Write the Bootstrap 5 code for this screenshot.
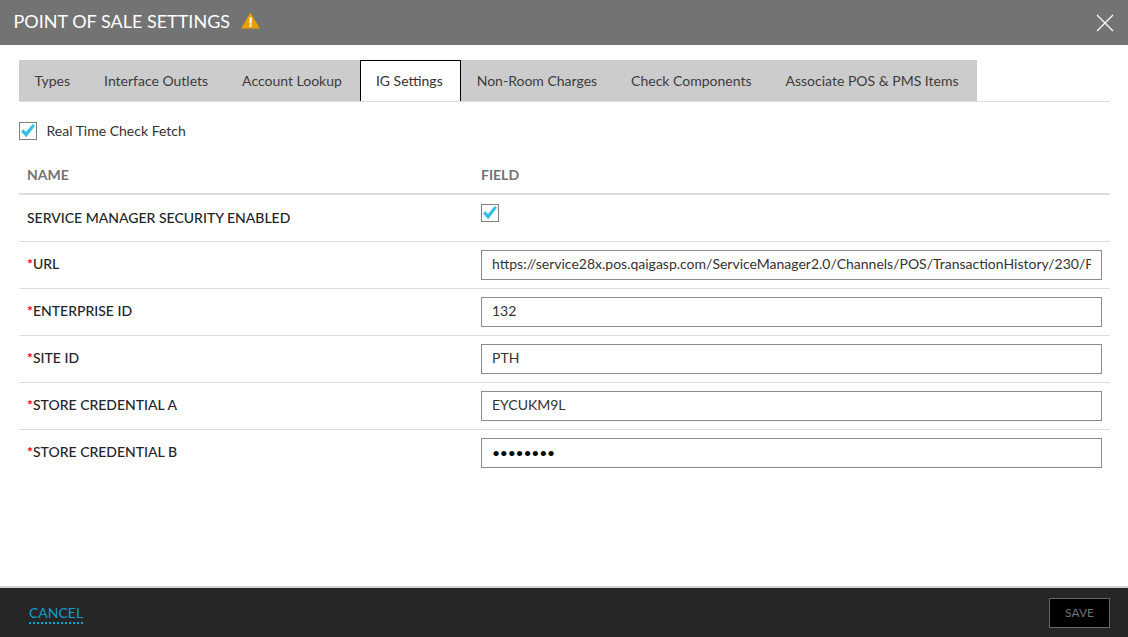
<!DOCTYPE html>
<html lang="en">
<head>
<meta charset="utf-8">
<title>Point of Sale Settings</title>
<link href="https://cdn.jsdelivr.net/npm/bootstrap@5.3.0/dist/css/bootstrap.min.css" rel="stylesheet">
<style>
html, body { height: 100%; }
body { font-family: Lato, "Liberation Sans", sans-serif; font-size: 14px; color: #000; overflow: hidden; }
.pos-shell { height: 637px; }
.pos-head { height: 45px; background: #737373; color: #fff; padding: 0 14px 3px 13.5px; }
.pos-title { font-size: 18px; font-weight: 400; margin: 0; line-height: 1; }
.pos-warn { margin-left: 11px; margin-top: -1px; }
.pos-close { width: 18px; height: 18px; display: block; background: none; border: 0; padding: 0; margin-top: -2px; }
.pos-body { padding: 15px 18px 0 19px; }
.pos-tabs { border-bottom: 1px solid #ddd; height: 42px; flex-wrap: nowrap; }
.pos-tabs .nav-link { height: 41px; padding: 0 17.5px 2px 14.5px; line-height: 39px; color: #3c3c3c; background: #ccc; border: 1px solid #ccc; border-bottom: 0; border-radius: 0; font-size: 14px; margin: 0; white-space: nowrap; }
.pos-tabs .nav-link.active { background: #fff; color: #333; border-color: #000; }
.pos-check[type=checkbox] { width: 18px; height: 18px; margin: 0; border: 1px solid #808080; border-radius: 0; background-color: #fff; flex: none; float: none; }
.pos-check[type=checkbox]:checked { background-color: #fff; border-color: #808080; background-size: 16px 16px; background-position: center; background-image: url("data:image/svg+xml,%3Csvg xmlns='http://www.w3.org/2000/svg' viewBox='0 0 16 16'%3E%3Cpath d='M1 8.4l2.4-2.2 2.5 2.8L12.8 1 15 2.8 6.2 14.2z' fill='%2333bfe6'/%3E%3C/svg%3E"); }
.pos-fetch { margin-top: 20px; height: 18px; }
.pos-fetch label { margin-left: 9.5px; color: #333; line-height: 18px; }
.pos-table { margin: 18px 0 0; table-layout: fixed; width: 100%; }
.pos-table > :not(caption) > * > * { padding: 0 8px; border-bottom: 1px solid #ddd; box-shadow: none; vertical-align: top; }
.pos-table thead th { height: 36px; border-bottom: 2px solid #ddd; color: #737373; font-weight: 700; font-size: 14px; padding-top: 8px; line-height: 17px; }
.pos-table tbody td { height: 47px; font-weight: 500; }
.pos-table .pos-label { padding-top: 13px; line-height: 17px; }
.pos-table .pos-field { padding-top: 8px; }
.pos-table tbody tr:first-child .pos-check { margin-top: 1px; }
.pos-table tbody tr:first-child .pos-label { padding-top: 14px; }
.pos-table tbody tr:last-child td { border-bottom: 0; }
.pos-star { color: #f00; font-weight: 700; }
.pos-input { height: 30px; width: 621px; padding: 0 10px 2px; border: 1px solid #8c8c8c; border-radius: 0; font-size: 14px; color: #333; }
.pos-input[type=password] { color: #000; letter-spacing: -0.25px; padding-bottom: 0; }
.pos-colname { width: 454px; }
.pos-foot { height: 51px; background: #262626; border-top: 2px solid #d4d4d4; padding: 0 18px 0 29px; margin-top: auto; }
.pos-cancel { color: #0f9fc8; font-size: 14px; text-decoration: none; border-bottom: 2px dotted #00a9d8; line-height: 17px; padding-bottom: 1px; margin-top: 3px; }
.pos-save { width: 61px; height: 30px; padding: 0; background: #000; border: 1px solid #666; border-radius: 0; color: #707070; font-size: 12px; margin-top: 1px; }
.pos-save:disabled { background: #000; border-color: #666; color: #707070; opacity: 1; }
</style>
</head>
<body>
<div class="pos-shell d-flex flex-column">
  <header class="pos-head d-flex align-items-center justify-content-between">
    <div class="d-flex align-items-center">
      <h1 class="pos-title">POINT OF SALE SETTINGS</h1>
      <svg class="pos-warn" width="19" height="17" viewBox="0 0 19 17" aria-hidden="true"><path d="M9.5 0.5L18.8 16.5H0.2z" fill="#e9a100"/><rect x="8.5" y="5.5" width="2.2" height="6" fill="#fff"/><rect x="8.5" y="12.5" width="2.2" height="2.2" fill="#fff"/></svg>
    </div>
    <button class="pos-close" type="button" aria-label="Close">
      <svg width="18" height="18" viewBox="0 0 18 18"><path d="M1 1L17 17M17 1L1 17" stroke="#fff" stroke-width="1.2" fill="none"/></svg>
    </button>
  </header>

  <main class="pos-body flex-grow-1">
    <ul class="nav pos-tabs">
      <li class="nav-item"><a class="nav-link" href="#">Types</a></li>
      <li class="nav-item"><a class="nav-link" href="#">Interface Outlets</a></li>
      <li class="nav-item"><a class="nav-link" href="#">Account Lookup</a></li>
      <li class="nav-item"><a class="nav-link active" href="#">IG Settings</a></li>
      <li class="nav-item"><a class="nav-link" href="#">Non-Room Charges</a></li>
      <li class="nav-item"><a class="nav-link" href="#">Check Components</a></li>
      <li class="nav-item"><a class="nav-link" href="#">Associate POS &amp; PMS Items</a></li>
    </ul>

    <div class="pos-fetch d-flex align-items-center">
      <input class="form-check-input pos-check" type="checkbox" id="fetch" checked>
      <label for="fetch">Real Time Check Fetch</label>
    </div>

    <table class="table pos-table">
      <colgroup><col class="pos-colname"><col></colgroup>
      <thead>
        <tr><th>NAME</th><th>FIELD</th></tr>
      </thead>
      <tbody>
        <tr>
          <td class="pos-label">SERVICE MANAGER SECURITY ENABLED</td>
          <td class="pos-field"><input class="form-check-input pos-check d-block" type="checkbox" checked aria-label="Service manager security enabled"></td>
        </tr>
        <tr>
          <td class="pos-label"><span class="pos-star">*</span>URL</td>
          <td class="pos-field"><input class="form-control pos-input" type="text" value="https://service28x.pos.qaigasp.com/ServiceManager2.0/Channels/POS/TransactionHistory/230/PTH"></td>
        </tr>
        <tr>
          <td class="pos-label"><span class="pos-star">*</span>ENTERPRISE ID</td>
          <td class="pos-field"><input class="form-control pos-input" type="text" value="132"></td>
        </tr>
        <tr>
          <td class="pos-label"><span class="pos-star">*</span>SITE ID</td>
          <td class="pos-field"><input class="form-control pos-input" type="text" value="PTH"></td>
        </tr>
        <tr>
          <td class="pos-label"><span class="pos-star">*</span>STORE CREDENTIAL A</td>
          <td class="pos-field"><input class="form-control pos-input" type="text" value="EYCUKM9L"></td>
        </tr>
        <tr>
          <td class="pos-label"><span class="pos-star">*</span>STORE CREDENTIAL B</td>
          <td class="pos-field"><input class="form-control pos-input" type="password" value="abcdefgh"></td>
        </tr>
      </tbody>
    </table>
  </main>

  <footer class="pos-foot d-flex align-items-center justify-content-between">
    <a class="pos-cancel" href="#">CANCEL</a>
    <button class="btn pos-save" type="button" disabled>SAVE</button>
  </footer>
</div>
<script src="https://cdn.jsdelivr.net/npm/bootstrap@5.3.0/dist/js/bootstrap.bundle.min.js"></script>
</body>
</html>
